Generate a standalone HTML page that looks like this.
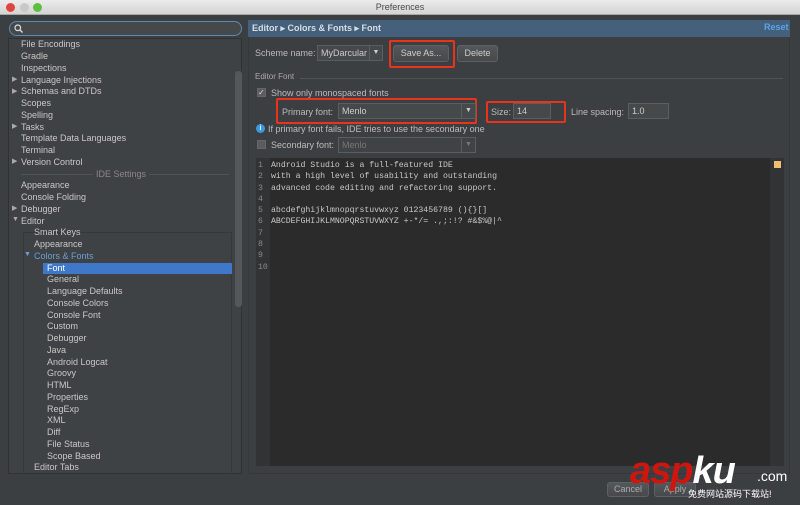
<!DOCTYPE html>
<html><head><meta charset="utf-8"><style>
*{margin:0;padding:0;box-sizing:border-box}
body{width:800px;height:505px;background:#3c3f41;font-family:"Liberation Sans",sans-serif;font-size:9px;color:#bbbbbb;position:relative;overflow:hidden}
.abs{position:absolute}
.title{left:0;top:0;width:800px;height:15px;background:linear-gradient(#ececec,#d3d3d3);border-bottom:1px solid #a8a8a8;color:#4a4a4a;text-align:center;font-size:9px;line-height:15px}
.dot{top:3px;width:9px;height:9px;border-radius:50%}
.search{left:9px;top:21px;width:233px;height:15px;border:1px solid #5a8ab5;border-radius:8px;background:#45494a}
.tree{left:8px;top:38px;width:234px;height:436px;border:1px solid #2f3133;background:#3f4244}
.it{position:absolute;white-space:nowrap;line-height:11px;color:#c8c8c8}
.arr{position:absolute;font-size:7px;color:#aaa}
.hdr{left:248px;top:20px;width:542px;height:17px;background:#44607a;color:#d8dde3;font-weight:bold;line-height:17px;padding-left:4px}
.box{border:1px solid #5b5e60;background:#45494a;color:#ccc;line-height:14px;padding-left:3px}
.red{border:2px solid #e8341c;border-radius:2px}
.btn{background:linear-gradient(#54585a,#47494b);border:1px solid #5e6163;border-radius:3px;color:#ccc;text-align:center}
.code{font-family:"Liberation Mono","DejaVu Sans Mono",monospace;font-size:8.2px;line-height:11.3px;color:#c8c8c8;white-space:pre}
</style></head><body>
<div class="abs title">Preferences</div>
<div class="abs dot" style="left:6px;background:#e0443e"></div>
<div class="abs dot" style="left:20px;background:#c8c8c8"></div>
<div class="abs dot" style="left:33px;background:#5cbf3d"></div>

<div class="abs search"><svg class="abs" style="left:4px;top:2px" width="9" height="9"><circle cx="3.8" cy="3.8" r="2.8" fill="none" stroke="#ddd" stroke-width="1.2"/><line x1="6" y1="6" x2="8.5" y2="8.5" stroke="#ddd" stroke-width="1.3"/></svg></div>

<div class="abs tree">
<div class="abs" style="left:14px;top:193px;width:209px;height:242px;border:1px solid #35383a;border-bottom:none"></div>
<div class="abs" style="left:226px;top:32px;width:7px;height:236px;background:#55585a;border-radius:3px"></div>
<div class="abs" style="left:34px;top:224px;width:189px;height:11px;background:#3f78c8"></div>
<div style="position:absolute;left:0;top:0;width:230px">
<div class="it" style="left:12px;top:0">File Encodings</div>
<div class="it" style="left:12px;top:12px">Gradle</div>
<div class="it" style="left:12px;top:23.5px">Inspections</div>
<div class="arr" style="left:3px;top:36px">▶</div><div class="it" style="left:12px;top:35.5px">Language Injections</div>
<div class="arr" style="left:3px;top:47.5px">▶</div><div class="it" style="left:12px;top:47px">Schemas and DTDs</div>
<div class="it" style="left:12px;top:59px">Scopes</div>
<div class="it" style="left:12px;top:70.5px">Spelling</div>
<div class="arr" style="left:3px;top:83px">▶</div><div class="it" style="left:12px;top:82.5px">Tasks</div>
<div class="it" style="left:12px;top:94px">Template Data Languages</div>
<div class="it" style="left:12px;top:106px">Terminal</div>
<div class="arr" style="left:3px;top:118px">▶</div><div class="it" style="left:12px;top:117.5px">Version Control</div>
<div class="abs" style="left:12px;top:135px;width:208px;height:1px;background:#505355"></div>
<div class="it" style="left:84px;top:129.5px;background:#3f4244;padding:0 3px;color:#888">IDE Settings</div>
<div class="it" style="left:12px;top:141px">Appearance</div>
<div class="it" style="left:12px;top:153px">Console Folding</div>
<div class="arr" style="left:3px;top:165px">▶</div><div class="it" style="left:12px;top:164.5px">Debugger</div>
<div class="arr" style="left:3px;top:177px">▼</div><div class="it" style="left:12px;top:176.5px">Editor</div>
<div class="it" style="left:25px;top:188px">Smart Keys</div>
<div class="it" style="left:25px;top:200px">Appearance</div>
<div class="arr" style="left:15px;top:212px;color:#6a9fd8">▼</div><div class="it" style="left:25px;top:211.5px;color:#6a9fd8">Colors &amp; Fonts</div>
<div class="it" style="left:38px;top:223.5px;color:#fff">Font</div>
<div class="it" style="left:38px;top:235px">General</div>
<div class="it" style="left:38px;top:247px">Language Defaults</div>
<div class="it" style="left:38px;top:258.5px">Console Colors</div>
<div class="it" style="left:38px;top:270.5px">Console Font</div>
<div class="it" style="left:38px;top:282px">Custom</div>
<div class="it" style="left:38px;top:294px">Debugger</div>
<div class="it" style="left:38px;top:305.5px">Java</div>
<div class="it" style="left:38px;top:317.5px">Android Logcat</div>
<div class="it" style="left:38px;top:329px">Groovy</div>
<div class="it" style="left:38px;top:341px">HTML</div>
<div class="it" style="left:38px;top:352.5px">Properties</div>
<div class="it" style="left:38px;top:364.5px">RegExp</div>
<div class="it" style="left:38px;top:376px">XML</div>
<div class="it" style="left:38px;top:388px">Diff</div>
<div class="it" style="left:38px;top:399.5px">File Status</div>
<div class="it" style="left:38px;top:411.5px">Scope Based</div>
<div class="it" style="left:25px;top:423px">Editor Tabs</div>
</div></div>

<div class="abs" style="left:248px;top:37px;width:542px;height:437px;border:1px solid #35383a;border-top:none"></div>
<div class="abs hdr">Editor ▸ Colors &amp; Fonts ▸ Font</div>
<div class="abs" style="left:764px;top:22px;color:#5aa3ea;font-weight:bold">Reset</div>

<div class="abs" style="left:255px;top:48px;color:#bbb">Scheme name:</div>
<div class="abs box" style="left:317px;top:45px;width:66px;height:16px">MyDarcular<span style="position:absolute;left:51px;top:0;border-left:1px solid #5b5e60;width:13px;text-align:center;font-size:7px">▼</span></div>
<div class="abs red" style="left:389px;top:40px;width:66px;height:28px"></div>
<div class="abs btn" style="left:393px;top:45px;width:56px;height:17px;line-height:15px">Save As...</div>
<div class="abs btn" style="left:457px;top:45px;width:41px;height:17px;line-height:15px">Delete</div>

<div class="abs" style="left:255px;top:72px;font-size:8px;color:#aaa">Editor Font</div>
<div class="abs" style="left:300px;top:78px;width:483px;height:1px;background:#505355"></div>
<div class="abs" style="left:257px;top:88px;width:9px;height:9px;background:#5a5d5f;border:1px solid #666;color:#ddd;font-size:8px;line-height:7px">✓</div>
<div class="abs" style="left:271px;top:88px">Show only monospaced fonts</div>
<div class="abs red" style="left:276px;top:98px;width:201px;height:26px"></div>
<div class="abs" style="left:282px;top:107px">Primary font:</div>
<div class="abs box" style="left:338px;top:103px;width:138px;height:16px">Menlo<span style="position:absolute;right:0;top:0;border-left:1px solid #5b5e60;width:14px;text-align:center;font-size:7px">▼</span></div>
<div class="abs red" style="left:486px;top:101px;width:80px;height:22px"></div>
<div class="abs" style="left:491px;top:107px">Size:</div>
<div class="abs box" style="left:513px;top:103px;width:38px;height:16px">14</div>
<div class="abs" style="left:571px;top:107px">Line spacing:</div>
<div class="abs box" style="left:628px;top:103px;width:41px;height:16px">1.0</div>
<div class="abs" style="left:256px;top:124px;width:9px;height:9px;border-radius:50%;background:#3d9ae0;color:#fff;font-size:7px;text-align:center;line-height:9px;font-weight:bold">i</div>
<div class="abs" style="left:268px;top:124px">If primary font fails, IDE tries to use the secondary one</div>
<div class="abs" style="left:257px;top:140px;width:9px;height:9px;background:#5a5d5f;border:1px solid #666"></div>
<div class="abs" style="left:271px;top:140px">Secondary font:</div>
<div class="abs box" style="left:338px;top:137px;width:138px;height:16px;color:#777;background:#404345">Menlo<span style="position:absolute;right:0;top:0;border-left:1px solid #5b5e60;width:14px;text-align:center;font-size:7px">▼</span></div>

<div class="abs" style="left:256px;top:158px;width:528px;height:308px;background:#2b2b2b"></div>
<div class="abs" style="left:256px;top:158px;width:14px;height:308px;background:#313335"></div>
<div class="abs" style="left:770px;top:158px;width:14px;height:308px;background:#313335"></div>
<div class="abs" style="left:774px;top:161px;width:7px;height:7px;background:#f0c070"></div>
<div class="abs code" style="left:258px;top:160px;color:#8a8a8a">1
2
3
4
5
6
7
8
9
10</div>
<div class="abs code" style="left:271px;top:160px">Android Studio is a full-featured IDE
with a high level of usability and outstanding
advanced code editing and refactoring support.

abcdefghijklmnopqrstuvwxyz 0123456789 (){}[]
ABCDEFGHIJKLMNOPQRSTUVWXYZ +-*/= .,;:!? #&amp;$%@|^</div>

<div class="abs btn" style="left:607px;top:482px;width:42px;height:15px;line-height:13px;color:#aaa">Cancel</div>
<div class="abs btn" style="left:654px;top:482px;width:42px;height:15px;line-height:13px;color:#aaa">Apply</div>
<div class="abs" style="left:630px;top:452px;font:italic bold 38px 'Liberation Sans',sans-serif;color:#d0150f;letter-spacing:-1px;line-height:38px">asp<span style="color:#fff">ku</span></div>
<div class="abs" style="left:757px;top:468px;font-size:14px;color:#fff">.com</div>
<div class="abs" style="left:688px;top:487px;font-size:9px;color:#fff;font-family:'Liberation Sans','Noto Sans CJK SC',sans-serif">免费网站源码下载站!</div>
</body></html>
